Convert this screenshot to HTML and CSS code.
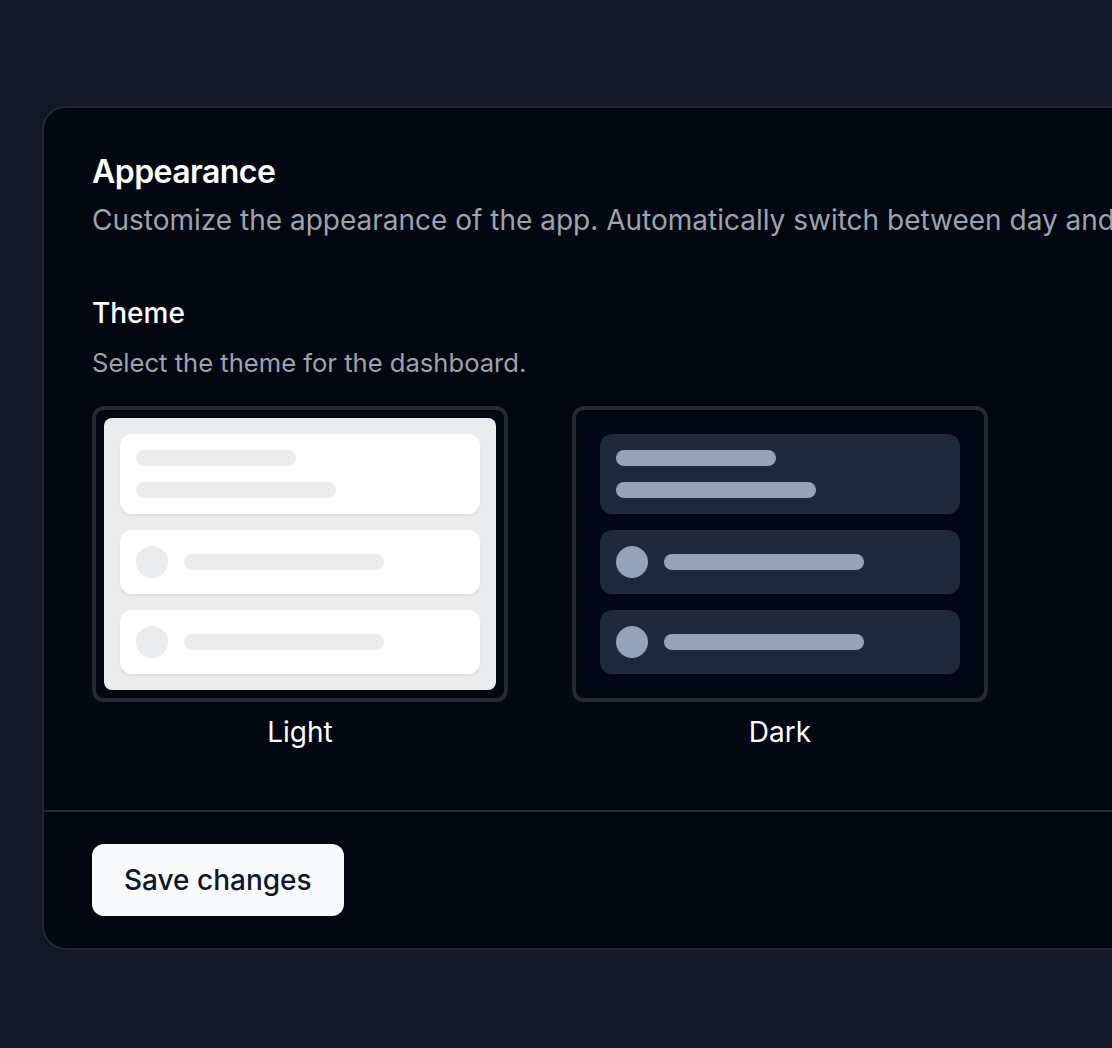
FILE: index.html
```html
<!DOCTYPE html>
<html lang="en">
<head>
<meta charset="utf-8">
<title>Appearance</title>
<link rel="stylesheet" href="styles.css">
</head>
<body>
<div class="page">
  <section class="card">
    <div class="card-body">
      <h2 class="title">Appearance</h2>
      <p class="subtitle">Customize the appearance of the app. Automatically switch between day and night themes.</p>

      <div class="field">
        <div class="label">Theme</div>
        <p class="hint">Select the theme for the dashboard.</p>
        <div class="options">
          <label class="option">
            <div class="frame">
              <div class="screen screen-light">
                <div class="tile tile-light tile-stack">
                  <div class="bar bar-short light-fill"></div>
                  <div class="bar bar-long light-fill"></div>
                </div>
                <div class="tile tile-light tile-row">
                  <div class="dot light-fill"></div>
                  <div class="bar bar-long light-fill"></div>
                </div>
                <div class="tile tile-light tile-row">
                  <div class="dot light-fill"></div>
                  <div class="bar bar-long light-fill"></div>
                </div>
              </div>
            </div>
            <span class="option-name">Light</span>
          </label>
          <label class="option">
            <div class="frame">
              <div class="screen screen-dark">
                <div class="tile tile-dark tile-stack">
                  <div class="bar bar-short dark-fill"></div>
                  <div class="bar bar-long dark-fill"></div>
                </div>
                <div class="tile tile-dark tile-row">
                  <div class="dot dark-fill"></div>
                  <div class="bar bar-long dark-fill"></div>
                </div>
                <div class="tile tile-dark tile-row">
                  <div class="dot dark-fill"></div>
                  <div class="bar bar-long dark-fill"></div>
                </div>
              </div>
            </div>
            <span class="option-name">Dark</span>
          </label>
        </div>
      </div>
    </div>
    <div class="card-footer">
      <button class="btn" type="button">Save changes</button>
    </div>
  </section>
</div>
</body>
</html>
```

FILE: styles.css
```css
* { box-sizing: border-box; }

html, body {
  margin: 0;
  padding: 0;
  background: #111827;
  overflow: hidden;
}

body {
  font-family: "Inter", "Noto Sans", "Liberation Sans", sans-serif;
  color: #f9fafb;
  width: 1112px;
  height: 1048px;
}

.page {
  padding: 106px 0 0 42px;
}

.card {
  width: 1400px;
  background: #030712;
  border: 2px solid #1f2937;
  border-radius: 24px;
}

.card-body {
  padding: 44px 48px 48px 48px;
}

.title {
  margin: 0;
  font-size: 32px;
  line-height: 40px;
  font-weight: 600;
  color: #ffffff;
  letter-spacing: -0.55px;
}

.subtitle {
  margin: 8px 0 0 0;
  font-size: 28px;
  line-height: 40px;
  color: #9ca3af;
  white-space: nowrap;
}

.field {
  margin-top: 59px;
}

.label {
  font-size: 28px;
  line-height: 28px;
  font-weight: 500;
  color: #ffffff;
}

.hint {
  margin: 16px 0 0 0;
  font-size: 25.6px;
  line-height: 40px;
  color: #9ca3af;
}

.options {
  margin-top: 23px;
  display: grid;
  grid-template-columns: 416px 416px;
  gap: 64px;
}

.option {
  display: block;
}

.frame {
  border: 4px solid #232a36;
  border-radius: 12px;
  padding: 8px;
}

.screen {
  display: flex;
  flex-direction: column;
  gap: 16px;
  padding: 16px;
  border-radius: 8px;
}

.screen-light { background: #ebecee; }
.screen-dark { background: #020617; }

.tile {
  border-radius: 12px;
  padding: 16px;
}

.tile-light {
  background: #ffffff;
  box-shadow: 0 2px 3px rgba(0, 0, 0, 0.06);
}

.tile-dark {
  background: #1e293b;
}

.tile-stack {
  display: flex;
  flex-direction: column;
  gap: 16px;
}

.tile-row {
  display: flex;
  align-items: center;
  gap: 16px;
}

.bar {
  height: 16px;
  border-radius: 16px;
}

.bar-short { width: 160px; }
.bar-long { width: 200px; }

.dot {
  width: 32px;
  height: 32px;
  border-radius: 50%;
  flex: none;
}

.light-fill { background: #ebecee; }
.dark-fill { background: #94a3b8; }

.option-name {
  display: block;
  padding: 16px;
  text-align: center;
  font-size: 28px;
  line-height: 28px;
  font-weight: 400;
  color: #ffffff;
}

.card-footer {
  border-top: 2px solid #1f2937;
  padding: 32px 48px 32px 48px;
}

.btn {
  height: 72px;
  padding: 0 32px;
  border: none;
  border-radius: 12px;
  background: #f8fafc;
  color: #0f172a;
  font-family: "Inter", "Noto Sans", "Liberation Sans", sans-serif;
  font-size: 28px;
  font-weight: 500;
  line-height: 28px;
}
```
